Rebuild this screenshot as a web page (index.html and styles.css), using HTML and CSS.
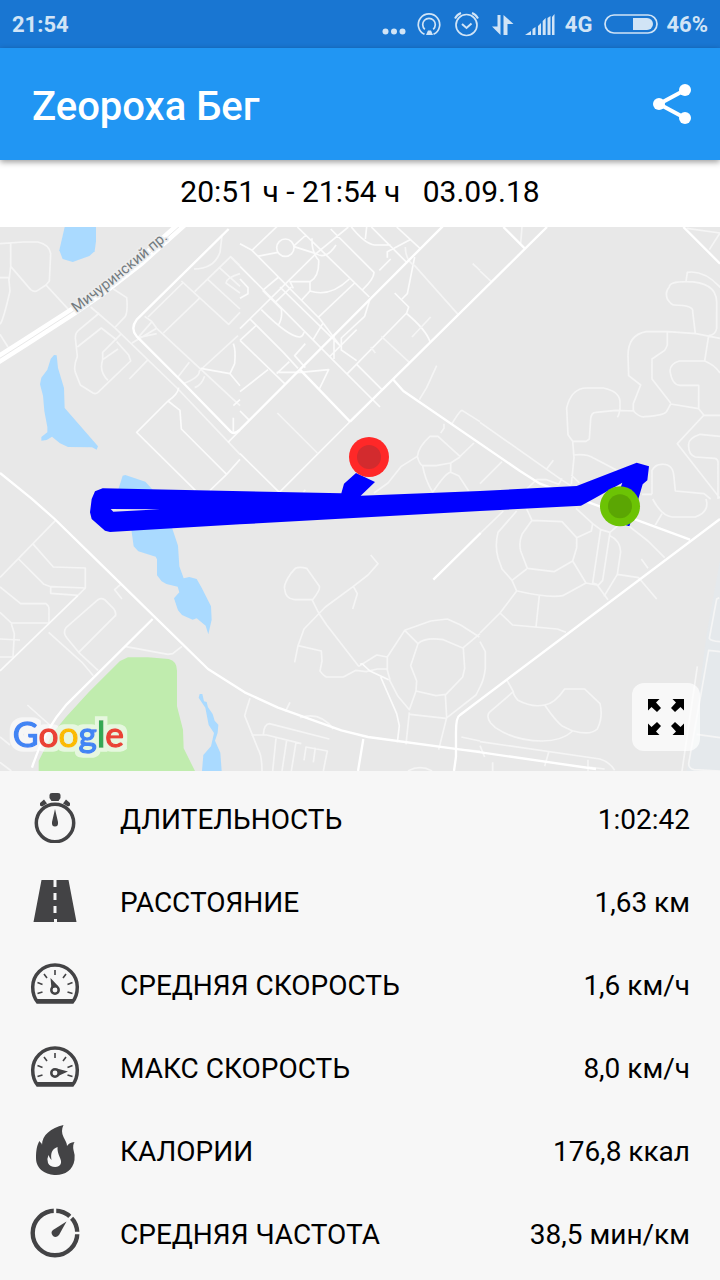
FILE: index.html
```html
<!DOCTYPE html>
<html lang="ru">
<head>
<meta charset="utf-8">
<meta name="viewport" content="width=device-width, initial-scale=1">
<title>Zeopoxa Бег</title>
<link rel="stylesheet" href="styles.css">
</head>
<body>
<div class="status">
  <span class="clock">21:54</span>
  <div class="status-icons">
    <svg class="status-art" viewBox="0 0 176 30" aria-hidden="true">
      <g fill="currentColor">
        <circle cx="4.500" cy="22.500" r="3"/><circle cx="13" cy="22.500" r="3"/><circle cx="21.500" cy="22.500" r="3"/>
        <path d="M45 26l2-4.500h3l2 4.500z"/>
        <path d="M119.500 6v20l-8.500-8.500h5.500V6zM122.500 26V6l10 9h-6v11z"/>
        <path d="M144 26l6-4v4zM151.500 26v-6l3-2v8zM157 26v-9l3-3v12zM161.700 26V12l3-3v17zM166.500 26V9l3-2v19zM171 26V8l2.500-3v21z"/>
      </g>
      <g fill="none" stroke="currentColor" stroke-width="1.700">
        <path d="M43.500 25.300a10.700 10.700 0 1 1 9 0"/>
        <path d="M43.800 20.300a6.300 6.300 0 1 1 8.400 0"/>
        <circle cx="85.500" cy="16" r="10.500"/>
        <path d="M81 15l4.500 4 5-4.500M74 9.500q2-4 6-5.500M97 9.500q-2-4-6-5.500" stroke-width="2"/>
      </g>
    </svg>
    <span>4G</span>
    <svg class="battery" viewBox="0 0 54 20" aria-hidden="true">
      <rect x="1" y="1" width="52" height="18" rx="9" fill="none" stroke="currentColor" stroke-width="1.700"/>
      <path d="M29 4h14a6 6 0 0 1 0 12H29z" fill="currentColor"/>
    </svg>
    <span>46%</span>
  </div>
</div>

<header class="appbar">
  <h1>Zeopoxa Бег</h1>
  <button class="share" type="button" aria-label="Поделиться">
    <svg viewBox="0 0 40 42" aria-hidden="true"><path d="M33 7L7 21l26 14" fill="none" stroke="#fff" stroke-width="4"/><g fill="#fff"><circle cx="33" cy="7" r="6"/><circle cx="7" cy="21" r="6"/><circle cx="33" cy="35" r="6"/></g></svg>
  </button>
</header>

<main>
<p class="when">20:51 ч - 21:54 ч   03.09.18</p>

<section class="map">
<svg class="map-art" viewBox="0 0 2160 1632" role="img" aria-label="Карта маршрута">
  <defs>
    <filter id="halo" x="-20%" y="-20%" width="140%" height="140%">
      <feMorphology in="SourceAlpha" operator="dilate" radius="11" result="fat"/>
      <feFlood flood-color="#fff" flood-opacity=".6"/>
      <feComposite in2="fat" operator="in" result="glow"/>
      <feMerge><feMergeNode in="glow"/><feMergeNode in="SourceGraphic"/></feMerge>
    </filter>
  </defs>
  <rect width="2160" height="1632" fill="#e8e8e8"/>
  <path fill="#e5e9ec" d="M2160 1000L2120 1220 2090 1450 2060 1632h100z"/>
  <g fill="#aadaff">
    <path d="M194 0L178 70l10 26 30 9 50-18 16-14 4-30V0z"/>
    <path d="M162 384l-10 12-10 32-18 24-4 20 9 34 4 46 9 48v16l-18 14v11l16-2 16-10 24 20 24 11 72 1 14 7 4-10-100-115-2-60-18-60-4-38z"/>
    <path d="M356 784l12-38 8-2 60 20 22 24v50h-90z"/>
    <path d="M393 900l8 58 14 15 52 16 4 8v48l14 18 14 8 34 8 5 17-16 18 12 36 12 14 32 14 12-4 27 22 8 26 10-44-2-40-28-56-15-26-22-6-17 4-13-36-4-62-30-90z"/>
    <path d="M599 1401l8 0 5 22 8 2 4 16 14 20 6 20 11 12-2 24-8 24 16 36 4 55h-59l4-48 23-26 9-40-16-24-10-52-20-30z"/>
  </g>
  <path fill="#c0ecae" d="M116 1632v-30l40-80 40-50 70-76 94-94 24-11 60 0 62 5q26 6 25 38v104l18 70 2 56 34 68z"/>
  <g class="minor">
    <path d="M0 50l70-5h44q34 8 38 35l-4 82-10 12-26 17q-8 6-20-3L32 118V47M138 174l68 74M0 152h26l4 40Q10 280 0 292M32 118L27 160M0 322l24 38M298 258l-60 50q-12 8-12 25l6 55q-12 30-6 48l15 38 38 24q8 4 15-2l98-94-6-18-36-40M232 360l72-57 46 36M362 322l-54 54v22l46-32M308 398q-12 36 16 62M340 186l40 26q4 40-4 56l-30 32M442 400l-54 56M272 240l72 62 190 184 152 160 34 36M434 268l22 16 14 20 250 232M456 284l-42 48 56-12M470 304l-74 44M444 270L548 168M490 318L598 214M544 162l142 130 34-36M584 194l108-105 28 27M624 158l96 88M658 122l62 56M692 90l28 28M582 126q60 0 78-50l6-50M720 140q-40 12-42 28l42 30M568 406l-34 44M550 470q50-20 48-38l116-106M584 482q20-6 30-34"/>
    <path class="bright" d="M700 350q8 20 4 60l-14 30-88-16M690 440l30 36M504 522l-94 94 176 174M504 522l36 28 4 56 136 136 40-45M680 742l-50 48M684 646l36-36M700 572v42M700 536l20-18M504 522q30-20 32-40"/>
  </g>
  <g class="minor bright" transform="translate(720)">
    <path d="M0 50l36 20 88-84M36 70L240 276l60 80 0 0L120 180M0 118L280 400 420 540M172 0l216 210M272 6l130 130q0 20-34 52M52 88l62-12M110 62a26 26 0 1 1 52 0a26 26 0 1 1-52 0M160 58l38-34M160 58l68 22L325 0M216 34q-2 40 20 66 2 50-26 64h-60l10 20M210 164v28l-26 28M210 192q60 20 118-36M0 305L228 80q30 20 60-26M68 190l48-40M108 224l46-44M64 248q80 80 114 82 10 0 14-14M114 296q14-20 10-50L68 190M30 276l100 100 44 48M0 340l134 130M0 340l50-46M0 156l24 26v18L0 214M390 216l-16 52-70 65v36l46 32M234 272l110-104M218 340l30-50M282 326v70M268 390l82-82M110 436h72l84-8-28 58M110 440l38-36M0 494l84-66M0 552l26 26M0 680l118 116M118 796L332 582M196 350l-32 36 32 36M322 440l178-182 6-18-42-42M350 412l78 78M498 258q60 50 72 86M486 216l16-16 22-110M418 130l34-34M442 92v-18l20-10 48-26M470 0l70 64M334 0q40 50 70 54h48M376 36l4-36M394 0l108 108"/>
  </g>
  <g class="minor" transform="translate(720)">
    <path d="M112 558l120 120M424 328l84 78M572 270l-56 60M496 60q0 40 30 58l128 144M698 110l22 20M590 416l-30 66-22 36M636 590q24-40 30-40l54 34M612 590v14l-10 14M532 688q4-30 38-60h24l66 60 42-40M532 688q6 24 16 28h40l44-8 28-18M548 716q6 40 30 80 40-60 54-60l24 10 30 46M632 708v28M532 688l-48 30-40 50-42 30M392 360l14 18M190 796l6-8"/>
  </g>
  <g class="minor" transform="translate(1440)">
    <path d="M126 0l-4 50M0 132l34 32M620 4l100 14-32 50M618 164l4-28q50-8 100 46M618 164q-50 0-50 16-14 14-6 36 12 18 20 18 60 0 56 20l8 66M618 164q90 0 92 60v80q-4 20-24 22M720 334l-72-14-84-6h-66q-54 10-54 72l2 60 36 28-22 56v22q20 20 34 17 60-4 66-16l12-22 84 14 16 20h48M562 314v40q-4 10-8 16l-38 26v60l56 72M686 326l-12 76h-76q-28 8-28 30 6 42 30 43h56v70M674 402q30 12 46 36M464 552l-56-2-60 6q-14 0-16 20l-4 60-10 7h-40l-14-20-4-80q14-60 60-60h50q48 10 50 40v20q-2 20-8 28M278 642l4 50-8 80M282 684q40-4 60 10l80 42M720 628l-60-6q-34 12-34 30-2 30 20 38l58 4q12 2 10 20v102M672 564l-80 86 128 164M0 586l244 172 28 18M200 726l20-26M140 786l30-28h30l36 14 10-18M274 744l24 24M486 802h30M516 802v-72q10-18 28-18 36-4 38 40l4 40 86 8 20 16M0 770l66-66"/>
  </g>
  <g class="minor" transform="translate(0 816)">
    <path d="M0 235l166-170M100 136l60 68 96 3v60l-22 22M56 180l76 76 20 7 104 4M152 263v20l82 6M0 264l62 50h76q10 6 9 20v38H34L0 340M34 374l9 30-4 70H0M0 420l60 3M146 400l100 90 34 40M346 350l-110 110-36-44q-12-14-2-30l96-84q10-6 20 0l26 26q10 12 6 24M236 460l58 54M366 300l-22-28 18-16M374 442l130 24 14-2 28-22M82 618l74 66M0 714l30 24M0 790l34 26"/>
    <path class="bright" d="M234 289L0 516"/>
  </g>
  <g class="minor" transform="translate(720 816)">
    <path d="M134 270q-4-14 18-46l14-16q12-6 34 0l38 54q4 10-20 40h-54q-28-2-30-32M216 302l20 40 24 36 96 124M392 168l22 26-30 34-44 34-84 62-64 66-18 50-10 50M340 262l12 22-14 46M174 440l70 16 2 30-6 30q12 16 20 18h50l38-20 30 4 34-8h28M356 502l54-34 32 6v40l8 28M442 474l52-80 78-28 50-6 40 18 56 36M494 394l40 40-22 66 18 46-2 30-20 56-34-40-26-50M534 434q20-20 76-12l60 26 4 60-6 26-50 52-30 4-60-14M670 446l50-42M510 646l108 12 90-70 12-24M508 640l-10 96M616 586l4 70-24 96M30 598q-10 30-16 52l40 100q12 20 12 66M136 638l14-28M180 656q60-20 100 34M70 706q2-30 18-32l180 46M34 708h46l104 26M108 718l-10 98M140 724l-14 92M168 730l-14 86M192 784l6-40 64 12-12 60M226 746l-6 44M504 816q36-20 72 0M664 714l56 12M664 752l56 4"/>
    <path class="bright" d="M360 496l6-2 24 22 56 26M422 534l48 110 8 36-6 50"/>
  </g>
  <g class="minor" transform="translate(1440 816)">
    <path d="M0 104l70-68M110 36L54 100q-10 40 0 76l12 34 30 34 14 32-50 66L0 402M140 30l16 34 90 4 44 48v30l-12 40-56 32-80-10-20-52q-6-26 4-50l30-42M140 210l-44 34M278 186l40 66-70 38q-40 8-136-14M290 116l44-20 4-22-50-46M338 74l24 18 28 8 30-26M362 92l-24 160 12 4 34 46M390 100l-22 144-16 18M390 110q30 14 32 48l-10 68-40 66M318 252l32 6M412 226l64 10 54 64M440 76l64 50 50 50M484 180l20 28M178 290l-10 94M60 342l38 36 134 12 26 10M518 0q26 50 58 54h70q44-16 32-54M526 78l20-34M80 542l20 36-72 62q-10 14 4 32l14 14q60 40 140 40 60 0 92-30l-30-14q-20-14-54-64-40 8-80-14-14-16-14-26M194 618q30-4 60-48h60l46 44q10 40-8 76-20 20-72 6M0 428l16 30v50q-4 34-16 56M718 296l-8 4-22 118q4 8 32 10M720 458l-34-4-60 340q0 14 16 18l78 4M652 502l-46 314M650 706l70 10M0 728l360 52q30 10 44 34M206 760l-12 42M324 782v34M324 804l50 6M38 790v26M0 740l14 34"/>
  </g>
  <g class="major">
    <path d="M686 6L410 278q-20 26 0 50l140 140 142 146q10 10 28-6L1328-2M900 428l150 156M1050 584L1641 0M1180 458l30 34 350 240 60 38 140 54M1510 0l64 64M2050 0l110 110"/>
    <path d="M0 738l94 76 70 62 100 98 360 352 110 70 100 46 190 68 80 20 324 44 360 52"/>
    <path d="M458 1176L200 1432q-70 80-104 190M2160 876L1380 1464q-12 6-12 50v75l-6 43M1090 1536l-16 96M1300 1058l142-140M1750 820l320 118"/>
  </g>
  <path class="avenue" d="M-10 400L75 346l140-90 90-62 115-90L552-14"/>
  <path class="avenue-line" d="M-10 400L75 346l140-90 90-62 115-90L552-14"/>
  <path id="avenue-name" d="M229 257L340 172 520 22" fill="none"/>
  <text class="street"><textPath href="#avenue-name">Мичуринский пр.</textPath></text>

  <path fill="#00f" fill-rule="evenodd" d="M275 816L285 793 308 784 1024 799 1032 770 1068 738 1125 765 1082 806 1440 792 1730 777 1910 707 1947 718 1942 760 1928 772 1905 850 1888 898 1878 895 1855 800 1867 767 1780 816 1743 836 1440 852 720 892 330 915 315 911 275 876 270 856zM332 846L340 854 480 847z"/>
  <circle cx="1107" cy="690" r="60" fill="#ff2828"/><circle cx="1107" cy="690" r="36" fill="#d32b2e"/>
  <circle cx="1860" cy="838" r="60" fill="#6cc304"/><circle cx="1860" cy="838" r="36" fill="#5ba603"/>
  <text class="brand" x="38" y="1560" filter="url(#halo)"><tspan fill="#4285f4" stroke="#4285f4">G</tspan><tspan fill="#ea4335" stroke="#ea4335">o</tspan><tspan fill="#fbbc05" stroke="#fbbc05">o</tspan><tspan fill="#4285f4" stroke="#4285f4">g</tspan><tspan fill="#34a853" stroke="#34a853">l</tspan><tspan fill="#ea4335" stroke="#ea4335">e</tspan></text>
</svg>
<button class="expand" type="button" aria-label="На весь экран">
  <svg viewBox="0 0 36 36" aria-hidden="true"><path id="arrow" d="M0 0h11.500L8 3.500 13 9l-4 4-5.500-5L0 11.500z"/><use href="#arrow" transform="translate(36) scale(-1 1)"/><use href="#arrow" transform="translate(0 36) scale(1 -1)"/><use href="#arrow" transform="translate(36 36) scale(-1 -1)"/></svg>
</button>
</section>

<dl class="stats">
  <div class="stat">
    <svg viewBox="0 0 50 50" aria-hidden="true"><circle cx="25" cy="30" r="18.700" fill="none" stroke="#434345" stroke-width="3.500"/><path fill="#434345" d="M22 0h6q2.500 0 2.500 2v3l-2 3h-7l-2-3V2q0-2 2.500-2zM10 10l4-3.500 3 4-5 3-2-1zM40 10l-4-3.500-3 4 5 3 2-1zM25 16l3 13q.5 4.500-3 4.500T22 29z"/></svg>
    <dt>ДЛИТЕЛЬНОСТЬ</dt><dd>1:02:42</dd>
  </div>
  <div class="stat">
    <svg viewBox="0 0 50 50" aria-hidden="true"><path fill="#434345" fill-rule="evenodd" d="M11.500 4h12v7h3V4h12l8 42H27v-3h-3v3H3.500zM23.500 17v7h3v-7zM23.500 30v7h3v-7z"/></svg>
    <dt>РАССТОЯНИЕ</dt><dd>1,63 км</dd>
  </div>
  <div class="stat">
    <svg viewBox="0 0 50 50" aria-hidden="true"><g id="dial" fill="none" stroke="#434345"><path d="M7.500 43Q2.700 37 2.700 28a22.300 22 0 0 1 44.600 0q0 9-4.800 15z" stroke-width="3.500"/><path d="M7 42h36" stroke-width="4"/><path d="M25 11v5M14 15l3 4M36 15l-3 4M7.500 23.500l5 2M42.500 23.500l-5 2M7.500 34.500l5-1.500M42.500 34.500l-5-1.500" stroke-width="1.600"/><circle cx="25" cy="31" r="3.700" stroke-width="2.500"/></g><path d="M20.500 19l8 8.500-3.500.5-3.500 2z" fill="#434345"/></svg>
    <dt>СРЕДНЯЯ СКОРОСТЬ</dt><dd>1,6 км/ч</dd>
  </div>
  <div class="stat">
    <svg viewBox="0 0 50 50" aria-hidden="true"><use href="#dial"/><path d="M38 29.500l-11-3 1.500 4-1.500 4z" fill="#434345"/></svg>
    <dt>МАКС СКОРОСТЬ</dt><dd>8,0 км/ч</dd>
  </div>
  <div class="stat">
    <svg viewBox="0 0 50 50" aria-hidden="true"><path fill="#434345" fill-rule="evenodd" d="M33.500 0q-3 6 0 12c2 4 3.500 6 3.500 9q2-3.500 7.500-4-2 3-1 8 1.500 4 1 10C43 45 35 50 26 50S6 45 6 33c0-8 1-13 3.500-17 1 2 2.500 2 2.500 4 0-10 9-17 21.500-20zM27.500 22c-6 2-7 7-6 13q-2-2-3-5-2 4-.5 8c2 5 12 5.500 13 0 1-4-4-8-3.500-16z"/></svg>
    <dt>КАЛОРИИ</dt><dd>176,8 ккал</dd>
  </div>
  <div class="stat">
    <svg viewBox="0 0 50 50" aria-hidden="true"><circle cx="25" cy="25" r="22.300" fill="none" stroke="#434345" stroke-width="4.400"/><path d="M25 0v8M50 25h-8M43 7l-5 5" stroke="#f7f7f7" stroke-width="2.500"/><path fill="#434345" d="M36.500 13.500L29 27q-3 3.500-6 1-3-3.500 0-6z"/></svg>
    <dt>СРЕДНЯЯ ЧАСТОТА</dt><dd>38,5 мин/км</dd>
  </div>
</dl>
</main>
</body>
</html>
```
FILE: styles.css
```css
* { box-sizing: border-box; }
body {
  margin: 0;
  background: #f7f7f7;
  color: #000;
  font-family: Roboto, "Noto Sans", sans-serif;
}
button { padding: 0; border: 0; background: none; cursor: pointer; }
svg { display: block; }

.status {
  display: flex;
  align-items: center;
  justify-content: space-between;
  height: 48px;
  padding: 0 12px;
  background: #1976d2;
  color: #d1e4f6;
  font-size: 22px;
  font-weight: 700;
}
.status-icons { display: flex; align-items: center; gap: 8px; }
.status-art { width: 176px; height: 30px; }
.battery { width: 54px; height: 20px; margin-left: 4px; }

.appbar {
  position: relative;
  display: flex;
  align-items: center;
  justify-content: space-between;
  height: 112px;
  padding: 6px 28px 0 32px;
  background: #2196f3;
  box-shadow: 0 2px 6px rgba(0, 0, 0, .4);
}
.appbar h1 { margin: 0; color: #fff; font-size: 40px; font-weight: 500; line-height: 48px; }
.share { margin-bottom: 6px; }
.share svg { width: 40px; height: 42px; }

.when {
  margin: 0;
  padding: 12px 0 15px;
  background: #fff;
  font-size: 30px;
  line-height: 40px;
  text-align: center;
  white-space: pre;
}

.map { position: relative; }
.map-art { width: 100%; height: auto; }
.minor { fill: none; stroke: #f5f5f5; stroke-width: 5px; stroke-linejoin: round; }
.bright { stroke: #fbfbfb; }
.major { fill: none; stroke: #fff; stroke-width: 7px; stroke-linejoin: round; }
.avenue { fill: none; stroke: #fff; stroke-width: 29px; }
.avenue-line { fill: none; stroke: #e8e8e8; stroke-width: 3px; }
.street {
  fill: #737b80;
  stroke: #ececec;
  stroke-width: 10px;
  paint-order: stroke;
  stroke-linejoin: round;
  font-size: 44px;
}
.brand { font-family: Lato, sans-serif; font-size: 106px; font-weight: 400; stroke-width: 4px; }
.expand {
  position: absolute;
  right: 20px;
  bottom: 20px;
  display: grid;
  place-items: center;
  width: 68px;
  height: 68px;
  border-radius: 12px;
  background: rgba(255, 255, 255, .7);
}
.expand svg { width: 36px; height: 36px; }

.stats { margin: 0; padding: 7px 30px 4px; }
.stat {
  display: grid;
  grid-template-columns: 50px 1fr auto;
  column-gap: 40px;
  align-items: center;
  height: 83px;
  font-size: 28px;
  line-height: 36px;
}
.stat svg { width: 50px; height: 50px; margin-bottom: 4px; }
.stat dd { margin: 0; }
```
